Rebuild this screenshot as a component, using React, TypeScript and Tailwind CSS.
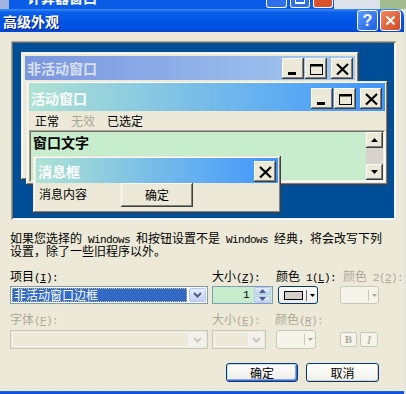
import React from "react";

const raised =
  "shadow-[inset_-1px_-1px_#404040,inset_1px_1px_#ffffff,inset_-2px_-2px_#808080,inset_2px_2px_#ECE9D8]";
const frame =
  "shadow-[inset_-1px_-1px_#404040,inset_1px_1px_#ECE9D8,inset_-2px_-2px_#808080,inset_2px_2px_#ffffff]";
const sunken =
  "shadow-[inset_1px_1px_#ACA899,inset_-1px_-1px_#ffffff,inset_2px_2px_#716F64,inset_-2px_-2px_#F1EFE2]";

// half-width latin, like SimSun's 6px latin
function H({ children }: { children: React.ReactNode }) {
  return (
    <span className="font-['Liberation_Mono',monospace] text-[11px] leading-[6px] tracking-[-0.6px] whitespace-pre">
      {children}
    </span>
  );
}

function CapBtn({ kind }: { kind: "min" | "max" | "close" }) {
  return (
    <div className={`w-[22px] h-[21px] shrink-0 bg-[#ECE9D8] ${raised}`}>
      <svg width="22" height="21" viewBox="0 0 22 21">
        {kind === "min" && <rect x="6" y="14" width="8" height="3" fill="#000" />}
        {kind === "max" && (
          <>
            <rect x="5.5" y="6.5" width="12" height="10" fill="none" stroke="#000" />
            <rect x="5" y="6" width="13" height="2.5" fill="#000" />
          </>
        )}
        {kind === "close" && (
          <path d="M6 6 L17 16.5 M17 6 L6 16.5" stroke="#000" strokeWidth="2.2" />
        )}
      </svg>
    </div>
  );
}

function ScrollBtn({ up }: { up?: boolean }) {
  return (
    <div className={`w-[17px] h-[16px] bg-[#ECE9D8] ${raised}`}>
      <svg width="17" height="16" viewBox="0 0 17 16">
        {up ? (
          <path d="M5 10 L12 10 L8.5 6 Z" fill="#000" />
        ) : (
          <path d="M5 6 L12 6 L8.5 10 Z" fill="#000" />
        )}
      </svg>
    </div>
  );
}

function Chevron({ color }: { color: string }) {
  return (
    <svg width="9" height="6" viewBox="0 0 9 6">
      <path d="M1 1 L4.5 4.5 L8 1" fill="none" stroke={color} strokeWidth="2" />
    </svg>
  );
}

function Arrow({ color }: { color: string }) {
  return (
    <svg width="5" height="3" viewBox="0 0 5 3">
      <path d="M0 0 L5 0 L2.5 3 Z" fill={color} />
    </svg>
  );
}

function PreviewPane() {
  return (
    <div className={`relative ml-[11px] mt-[9px] w-[385px] h-[179px] bg-[#004E98] ${sunken}`}>
      {/* inactive window */}
      <div className={`absolute left-[10px] top-[11px] w-[338px] h-[128px] bg-[#ECE9D8] ${frame} p-[4px]`}>
        <div className="h-[24px] flex items-center bg-[linear-gradient(to_right,#7A96DF,#A6CAF0)]">
          <span className="pl-[2px] text-[14px] font-bold leading-[16px] text-[#D8E0F2]">非活动窗口</span>
          <div className="ml-auto flex gap-[1px] pr-[2px]">
            <CapBtn kind="min" />
            <CapBtn kind="max" />
            <div className="w-[2px]" />
            <CapBtn kind="close" />
          </div>
        </div>
      </div>

      {/* active window */}
      <div className={`absolute left-[15px] top-[40px] w-[362px] h-[104px] bg-[#ECE9D8] ${frame} pt-[2px] px-[3px] pb-[3px] flex flex-col`}>
        <div className="h-[28px] pt-[2px] flex items-center bg-[linear-gradient(to_right,#AEE2D3,#3E95FE)]">
          <span className="pl-[2px] text-[14px] font-bold leading-[16px] text-white">活动窗口</span>
          <div className="ml-auto flex gap-[1px] pr-[3px]">
            <CapBtn kind="min" />
            <CapBtn kind="max" />
            <div className="w-[2px]" />
            <CapBtn kind="close" />
          </div>
        </div>
        <div className="h-[19px] flex items-center gap-[12px] pl-[6px] leading-[19px]">
          <span>正常</span>
          <span className="text-[#ACA899]">无效</span>
          <span>已选定</span>
        </div>
        <div className={`h-[52px] ${sunken} p-[2px]`}>
          <div className="h-full flex bg-[#C7EDCC]">
            <div className="flex-1 pl-[2px] pt-[2px] text-[14px] font-bold leading-[16px]">窗口文字</div>
            <div className="w-[17px] flex flex-col">
              <ScrollBtn up />
              <div className="h-[16px] bg-[#D6D3CE]" />
              <ScrollBtn />
            </div>
          </div>
        </div>
      </div>

      {/* message box */}
      <div className={`absolute left-[22px] top-[115px] w-[248px] h-[57px] bg-[#ECE9D8] ${frame} pt-[2px] px-[3px] pb-[2px] flex flex-col`}>
        <div className="h-[25px] pt-[1px] flex items-center bg-[linear-gradient(to_right,#AEE2D3,#3E95FE)]">
          <span className="pl-[2px] text-[14px] font-bold leading-[16px] text-white">消息框</span>
          <div className="ml-auto pr-[2px]">
            <CapBtn kind="close" />
          </div>
        </div>
        <div className="flex-1 flex items-start">
          <span className="pl-[3px] pt-[4px] leading-[13px]">消息内容</span>
          <div className={`ml-[34px] w-[72px] h-[24px] flex items-center justify-center ${raised}`}>确定</div>
        </div>
      </div>
    </div>
  );
}

export default function App() {
  return (
    <div className="w-[406px] h-[394px] overflow-hidden flex flex-col bg-[#E2E4DE] font-['Noto_Sans_CJK_SC',sans-serif] text-[12px] text-black">
      {/* window behind */}
      <div className="h-[9px] shrink-0 flex overflow-hidden">
        <div className="w-[9px] bg-[#9FB3DE]" />
        <div className="w-[325px] flex bg-[#0A5BE6] overflow-hidden">
          <span className="ml-[18px] -mt-[11px] text-[14px] font-bold leading-[16px] text-white">计算器窗口</span>
          <div className="ml-auto flex gap-[3px] pr-[1px]">
            <div className="w-[21px] h-[8px] rounded-b-[3px] border border-t-0 border-white bg-[#2F6FEA]" />
            <div className="w-[20px] h-[8px] rounded-b-[3px] border border-t-0 border-white bg-[#2F6FEA] flex justify-center">
              <div className="w-[10px] h-[4px] border-b-2 border-x border-white" />
            </div>
            <div className="w-[20px] h-[8px] rounded-b-[3px] border border-t-0 border-white bg-[#D9532C]" />
          </div>
        </div>
        <div className="w-[46px] bg-[#DDE2EA]" />
        <div className="flex-1 bg-[#A3BC8E]" />
      </div>

      {/* dialog */}
      <div className="flex-1 w-[404px] flex flex-col">
        <div className="h-[23px] shrink-0 flex items-center rounded-tr-[7px] bg-[linear-gradient(to_bottom,#3D8EF5_0%,#0A5FEA_14%,#0055E5_50%,#0051DF_85%,#0043C9_100%)]">
          <span className="pl-[3px] text-[14px] font-bold leading-[16px] text-white [text-shadow:1px_1px_0_#0A1A80]">
            高级外观
          </span>
          <div className="ml-auto flex gap-[2px] pr-[3px]">
            <div className="w-[21px] h-[21px] rounded-[3px] border border-white bg-[linear-gradient(135deg,#5C9BFF,#1D5FE0)] flex items-center justify-center text-white text-[16px] font-bold leading-none font-['Liberation_Sans',sans-serif]">
              ?
            </div>
            <div className="w-[21px] h-[21px] rounded-[3px] border border-white bg-[linear-gradient(135deg,#EE8A66,#D4491E)] flex items-center justify-center">
              <svg width="11" height="11" viewBox="0 0 11 11">
                <path d="M1.5 1.5 L9.5 9.5 M9.5 1.5 L1.5 9.5" stroke="#fff" strokeWidth="2" />
              </svg>
            </div>
          </div>
        </div>

        <div className="flex-1 bg-[#ECE9D8] flex flex-col">
          <PreviewPane />

          <div className="mt-[11px] ml-[10px] leading-[13px] whitespace-nowrap">
            如果您选择的<H> Windows </H>和按钮设置不是<H> Windows </H>经典，将会改写下列
            <br />
            设置，除了一些旧程序以外。
          </div>

          <div className="mt-[12px] ml-[10px] flex leading-[13px] whitespace-nowrap">
            <div className="w-[202px]">
              项目<H>(<u>I</u>):</H>
            </div>
            <div className="w-[64px]">
              大小<H>(<u>Z</u>):</H>
            </div>
            <div className="w-[67px]">
              颜色<H> 1(<u>L</u>):</H>
            </div>
            <div className="text-[#ACA899]">
              颜色<H> 2(<u>2</u>):</H>
            </div>
          </div>

          <div className="mt-[4px] ml-[10px] flex h-[18px]">
            <div className="w-[198px] flex border border-[#7F9DB9] bg-white p-[1px]">
              <div className="flex-1 flex items-center bg-[#316AC5] border border-dotted border-[#D8C070] text-white leading-none">
                <span className="pl-[1px]">非活动窗口边框</span>
              </div>
              <div className="ml-[2px] w-[17px] rounded-[2px] border border-[#B7C9F2] bg-[linear-gradient(#E4ECFE,#C1D1F8)] flex items-center justify-center">
                <Chevron color="#4D6185" />
              </div>
            </div>
            <div className="ml-[4px] w-[61px] flex border border-[#7F9DB9] bg-[#C7EDCC]">
              <div className="flex-1 flex items-center justify-end pr-[5px]">
                <H>1</H>
              </div>
              <div className="w-[17px] mr-[1px] flex flex-col gap-[1px]">
                <div className="flex-1 rounded-[2px] border border-[#B7C9F2] bg-[linear-gradient(#E4ECFE,#C1D1F8)] flex items-center justify-center">
                  <svg width="7" height="4" viewBox="0 0 7 4">
                    <path d="M0 4 L7 4 L3.5 0 Z" fill="#4D6185" />
                  </svg>
                </div>
                <div className="flex-1 rounded-[2px] border border-[#B7C9F2] bg-[linear-gradient(#E4ECFE,#C1D1F8)] flex items-center justify-center">
                  <svg width="7" height="4" viewBox="0 0 7 4">
                    <path d="M0 0 L7 0 L3.5 4 Z" fill="#4D6185" />
                  </svg>
                </div>
              </div>
            </div>
            <div className="ml-[5px] w-[40px] flex items-center rounded-[3px] border border-[#003C74] bg-[linear-gradient(#FFFFFF,#ECEBE6)]">
              <div className="ml-[5px] w-[19px] h-[9px] border border-black bg-[#D4D0C8]" />
              <div className="ml-[3px] w-[1px] h-[11px] bg-[#6B6B6B]" />
              <div className="ml-[3px] flex">
                <Arrow color="#000" />
              </div>
            </div>
            <div className="ml-[22px] w-[39px] flex items-center rounded-[3px] border border-[#C9C7BA] bg-[#F5F4EA]">
              <div className="ml-[27px] w-[1px] h-[11px] bg-[#C9C7BA]" />
              <div className="ml-[3px] flex">
                <Arrow color="#ACA899" />
              </div>
            </div>
          </div>

          <div className="mt-[8px] ml-[10px] flex leading-[13px] whitespace-nowrap text-[#ACA899]">
            <div className="w-[202px]">
              字体<H>(<u>F</u>):</H>
            </div>
            <div className="w-[63px]">
              大小<H>(<u>E</u>):</H>
            </div>
            <div>
              颜色<H>(<u>R</u>):</H>
            </div>
          </div>

          <div className="mt-[5px] ml-[10px] flex h-[19px]">
            <div className="w-[198px] flex border border-[#C9C7BA] bg-[#ECE9D8] p-[1px]">
              <div className="flex-1 border border-[#F4F3EE]" />
              <div className="w-[17px] rounded-[2px] bg-[#F2F1EB] flex items-center justify-center">
                <Chevron color="#C9C7BA" />
              </div>
            </div>
            <div className="ml-[4px] w-[54px] flex border border-[#C9C7BA] bg-[#ECE9D8] p-[1px]">
              <div className="flex-1 border border-[#F4F3EE]" />
              <div className="w-[15px] rounded-[2px] bg-[#F2F1EB] flex items-center justify-center">
                <Chevron color="#C9C7BA" />
              </div>
            </div>
            <div className="ml-[10px] w-[40px] flex items-center rounded-[3px] border border-[#C9C7BA] bg-[#F5F4EA]">
              <div className="ml-[27px] w-[1px] h-[11px] bg-[#C9C7BA]" />
              <div className="ml-[3px] flex">
                <Arrow color="#ACA899" />
              </div>
            </div>
            <div className="ml-[24px] mt-[2px] w-[17px] h-[15px] rounded-[2px] border border-[#C9C7BA] bg-[#F5F4EA] flex items-center justify-center font-['Liberation_Serif',serif] font-bold text-[11px] leading-none text-[#ACA899]">
              B
            </div>
            <div className="ml-[3px] mt-[2px] w-[18px] h-[15px] rounded-[2px] border border-[#C9C7BA] bg-[#F5F4EA] flex items-center justify-center font-['Liberation_Serif',serif] italic text-[12px] leading-none text-[#ACA899]">
              I
            </div>
          </div>

          <div className="mt-[14px] ml-[226px] flex h-[19px]">
            <div className="w-[72px] flex items-center justify-center rounded-[3px] border border-[#003C74] bg-[linear-gradient(#FFFFFF,#ECEBE6)] shadow-[inset_-1px_-1px_#3D6CD4,inset_1px_1px_#CEDDFA,inset_-2px_-2px_#88A8EA] leading-none">
              确定
            </div>
            <div className="ml-[8px] w-[73px] flex items-center justify-center rounded-[3px] border border-[#003C74] bg-[linear-gradient(#FFFFFF,#F0F0EA)] shadow-[inset_-1px_-1px_#D6D0C5] leading-none">
              取消
            </div>
          </div>
        </div>

        <div className="h-[3px] shrink-0 bg-[linear-gradient(to_bottom,#1868EE,#0A43D2)]" />
      </div>
    </div>
  );
}
